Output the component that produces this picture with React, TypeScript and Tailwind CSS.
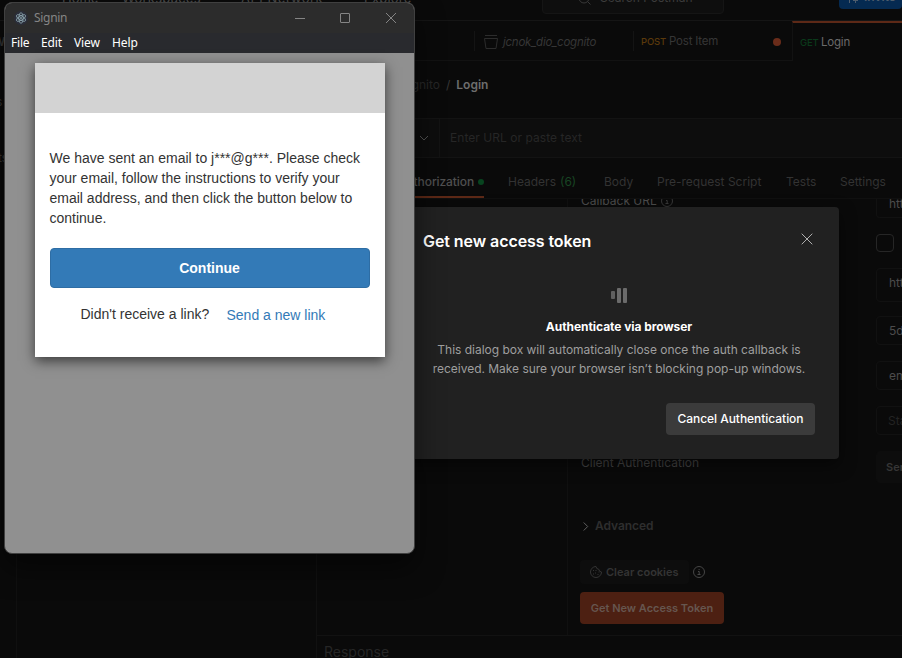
import React from "react";

function InfoIcon({ className }: { className?: string }) {
  return (
    <svg className={className} width="12" height="12" viewBox="0 0 12 12" fill="none" stroke="currentColor">
      <circle cx="6" cy="6" r="5.5" />
      <path d="M5 5.5h1.2V8.5M4.5 8.5h3M5.6 3.5h1" />
    </svg>
  );
}

function TopBar() {
  return (
    <header className="flex h-[21px] shrink-0 items-start overflow-hidden border-b border-[#151515] text-[12px] text-[#3c3c3c]">
      <div className="-mt-[11px] flex h-5 w-[542px] shrink-0 pl-[62px] text-[13px] leading-[18px] text-[#4c4c4c]">
        <span className="w-[60px]">Home</span>
        <span className="w-[119px] tracking-[0.25px]">Workspaces</span>
        <span className="w-[123px] tracking-[0.5px]">API Network</span>
        <span className="tracking-[0.2px]">Explore</span>
      </div>
      <div className="-mt-3 flex h-[26px] w-[182px] shrink-0 rounded border border-[#151515] bg-[#0e0e0e] pl-[33px]">
        <svg className="mt-0.5" width="16" height="14" viewBox="0 0 16 14" fill="none" stroke="#383838">
          <circle cx="8" cy="7" r="5" />
          <path d="M11.5 10.5l3 3" />
        </svg>
        <span className="ml-2 leading-[17px]">Search Postman</span>
      </div>
      <div className="-mt-3 ml-[115px] flex h-[21px] w-[63px] shrink-0 rounded bg-[#052a51] pl-2 font-semibold text-[#4e5d6d]">
        <svg className="mt-2" width="13" height="9" viewBox="0 0 13 9" fill="none" stroke="currentColor">
          <path d="M2.500 1v6M8.500 1v6M6 4.500h5" />
        </svg>
        <span className="ml-1 leading-[17px]">Invite</span>
      </div>
    </header>
  );
}

function RequestTabs() {
  return (
    <div className="flex h-10 shrink-0 text-[11px] text-[#363636]">
      <div className="w-[157px] shrink-0 border-b border-[#121212]" />
      <div className="flex w-[159px] shrink-0 items-center border-b border-[#121212]">
        <div className="flex h-5 w-full items-center border-l border-[#141414] pl-[9px]">
          <svg className="mt-[3px]" width="14" height="14" viewBox="0 0 14 14" fill="none" stroke="#2c2c2c">
            <path d="M1 .5h12M.5 3.500h13L12 13.500H2L.5 3.500z" />
          </svg>
          <span className="mt-1 ml-[5px] text-[11.500px] tracking-[-0.25px] italic">jcnok_dio_cognito</span>
        </div>
      </div>
      <div className="flex w-[159px] shrink-0 items-center border-b border-[#121212]">
        <div className="flex h-5 w-full items-center border-l border-[#141414] pt-[3px] pl-[7px]">
          <span className="w-[28px] text-[9.500px] font-medium tracking-[-0.2px] text-[#5a390b]">POST</span>
          <span className="w-[104px] text-[11.500px] tracking-[-0.2px]">Post Item</span>
          <i className="size-2 rounded-full bg-[#6a2c1a]" />
        </div>
      </div>
      <div className="flex flex-1 items-center border-t-2 border-l border-t-[#5d2917] border-l-[#121212] pt-[2px] pl-[7px]">
        <span className="w-[21px] text-[9.500px] font-medium tracking-[-0.2px] text-[#0a3a1b]">GET</span>
        <span className="text-[11.500px] tracking-[-0.2px] text-[#6a6a6a]">Login</span>
      </div>
    </div>
  );
}

function RequestPane() {
  return (
    <>
      <div className="flex h-[57px] shrink-0 pt-4 pl-[79px] text-[12px] leading-4 text-[#262626]">
        <span className="w-11 text-right">cognito</span>
        <span className="ml-[6px] text-[#383838]">/</span>
        <span className="ml-[6px] font-semibold text-[#6d6d6d]">Login</span>
      </div>
      <div className="flex h-10 shrink-0 items-center border-y border-[#131313] bg-[#0d0d0d]">
        <div className="flex h-full w-[123px] items-center justify-end border-r border-[#131313] pr-[10px]">
          <svg width="10" height="6" viewBox="0 0 10 6" fill="none" stroke="#505050"><path d="M1 1l4 4 4-4" /></svg>
        </div>
        <span className="ml-[10px] text-[12px] tracking-[0.05px] text-[#262626]">Enter URL or paste text</span>
      </div>
      <div className="flex h-[41px] shrink-0 border-b border-[#101010] text-[12px] text-[#333]">
        <div className="ml-[60px] flex h-10 w-[107px] shrink-0 items-center justify-end border-b-2 border-[#5d2917] pt-[10px] font-medium text-[#505050]">
          <span className="tracking-[-0.1px]">Authorization</span>
          <i className="ml-1 size-[6px] rounded-full bg-[#08441f]" />
        </div>
        <div className="flex h-10 items-center pt-2 pl-6 whitespace-nowrap">
          <span className="w-[52px]">Headers</span>
          <span className="w-[44px] text-[#184523]">(6)</span>
          <span className="w-[53px]">Body</span>
          <span className="w-[129px]">Pre-request Script</span>
          <span className="w-[54px]">Tests</span>
          <span>Settings</span>
        </div>
      </div>
    </>
  );
}

function Field({ children, className }: { children?: React.ReactNode; className: string }) {
  return (
    <div className={"w-[120px] shrink-0 rounded border text-[#4c4c4c] " + className}>
      {children}
    </div>
  );
}

function TokenSettings() {
  return (
    <div className="flex h-[437px] shrink-0 border-b border-[#121212] text-[12px]">
      <div className="w-[251px] shrink-0 border-r border-[#101010]" />
      <div className="flex w-[308px] shrink-0 flex-col overflow-hidden pl-3">
        <div className="-mt-[6px] flex h-4 shrink-0 items-center pl-px text-[#4c4c4c]">
          <span>Callback URL</span>
          <InfoIcon className="ml-1 text-[#383838]" />
        </div>
        <div className="mt-[246px] h-4 pl-px leading-4 text-[#434343]">Client Authentication</div>
        <div className="mt-[47px] flex h-4 items-center font-semibold tracking-[-0.05px] text-[#2e2e2e]">
          <svg className="mr-[6px] ml-[3px]" width="6" height="9" viewBox="0 0 6 9" fill="none" stroke="#606060"><path d="M.7.5l4 4-4 4" /></svg>
          Advanced
        </div>
        <div className="mt-[26px] flex h-6 items-center">
          <div className="flex h-6 w-[109px] items-center rounded bg-[#0d0d0d] pl-[10px] text-[11px] font-semibold text-[#343434]">
            <svg className="mr-1 shrink-0" width="12" height="12" viewBox="0 0 12 12" fill="none" stroke="currentColor">
              <path d="M6 .5a5.500 5.500 0 105.500 5.500A3 3 0 018.800 3.300 3 3 0 016 .5z" />
              <path d="M3 4.500h1M5 7h1M3 8h1M7.500 8.500h1M8.500 6h1M5.500 4.500h1" />
            </svg>
            <span className="whitespace-nowrap">Clear cookies</span>
          </div>
          <InfoIcon className="ml-1 text-[#464646]" />
        </div>
        <button className="mt-2 h-8 w-36 shrink-0 rounded bg-[#4d2012] text-[11px] font-semibold text-[#66564f]">Get New Access Token</button>
      </div>
      <div className="flex min-w-0 flex-1 flex-col overflow-hidden">
        <Field className="h-[19px] rounded-t-none border-t-0 border-[#111] pl-[12px] leading-[10px]">https</Field>
        <div className="mt-4 size-[18px] shrink-0 rounded border border-[#262626]" />
        <Field className="mt-4 h-[34px] border-[#111] pl-[12px] leading-[28px]">https</Field>
        <Field className="mt-[14px] h-[29px] border-[#111] pl-[12px] leading-[28px]">5d8a</Field>
        <Field className="mt-4 h-[29px] border-[#111] pl-[12px] leading-[27px]">email</Field>
        <Field className="mt-4 h-[29px] border-[#111] pl-[11px] leading-[28px] text-[#232323]!">State</Field>
        <Field className="mt-4 h-8 border-[#0d0d0d] bg-[#0d0d0d] pl-[9px] text-[11px] leading-[30px] font-semibold text-[#363636]!">Send</Field>
      </div>
    </div>
  );
}

function TokenDialog() {
  return (
    <section className="absolute top-[207px] left-[399px] h-[252px] w-[440px] rounded bg-[#212121] px-6 pt-6 shadow-[0_6px_16px_rgba(0,0,0,0.5)]">
      <div className="flex h-5 items-center justify-between pr-[2px]">
        <h1 className="text-[16px] font-semibold tracking-[-0.07px] text-white">Get new access token</h1>
        <svg width="12" height="12" viewBox="0 0 12 12" className="-mt-[5px]" fill="none" stroke="#b0b0b0"><path d="M.7.7l10.600 10.600M11.300.7L.7 11.300" /></svg>
      </div>
      <div className="mt-9 flex h-4 items-center justify-center gap-[2px]">
        <i className="h-2 w-1 rounded-[1px] bg-[#606060]" />
        <i className="h-[15px] w-1 rounded-[1px] bg-[#6b6b6b]" />
        <i className="h-[15px] w-1 rounded-[1px] bg-[#6b6b6b]" />
      </div>
      <h2 className="mt-4 text-center text-[12px] leading-4 font-bold tracking-[-0.05px] text-white">Authenticate via browser</h2>
      <p className="mt-[5px] text-center text-[12px] leading-[19px] tracking-[-0.02px] whitespace-nowrap text-[#9f9f9f]">
        This dialog box will automatically close once the auth callback is<br />
        received. Make sure your browser isn’t blocking pop-up windows.
      </p>
      <div className="mt-[25px] flex justify-end">
        <button className="h-8 w-[149px] rounded bg-[#3b3b3b] text-[12px] font-medium tracking-[-0.04px] text-white">Cancel Authentication</button>
      </div>
    </section>
  );
}

function SigninWindow() {
  return (
    <section className="absolute top-[2px] left-1 flex h-[552px] w-[411px] flex-col overflow-hidden rounded-lg border border-[#404040] bg-[#909090] shadow-[0_14px_28px_rgba(0,0,0,0.5)]">
      <div className="flex h-[30px] shrink-0 items-center bg-[#2c2c2c] pl-[9px] text-[#858585]">
        <div className="flex size-[14px] items-center justify-center rounded-full bg-[#2b2e3a]">
          <svg width="12" height="12" viewBox="0 0 12 12" fill="none" stroke="#8fa9b1" strokeWidth=".8">
            <ellipse cx="6" cy="6" rx="5.200" ry="2.100" transform="rotate(30 6 6)" />
            <ellipse cx="6" cy="6" rx="5.200" ry="2.100" transform="rotate(90 6 6)" />
            <ellipse cx="6" cy="6" rx="5.200" ry="2.100" transform="rotate(150 6 6)" />
            <circle cx="6" cy="6" r=".6" fill="#8fa9b1" />
          </svg>
        </div>
        <span className="ml-[6px] w-[261px] font-['Noto_Sans',sans-serif] text-[12px] tracking-[-0.3px]">Signin</span>
        <svg width="102" height="12" viewBox="0 0 102 12" fill="none" stroke="currentColor">
          <path d="M0 6.500h10" />
          <rect x="45.500" y="1.500" width="9" height="9" rx=".5" />
          <path d="M91 1l10 10M101 1L91 11" />
        </svg>
      </div>
      <nav className="flex h-5 shrink-0 items-center bg-[#292a2e] pl-[6px] font-['Noto_Sans',sans-serif] text-[12px] text-white">
        <span className="w-[30px] tracking-[-0.2px]">File</span>
        <span className="w-[33px] tracking-[-0.1px]">Edit</span>
        <span className="w-[38px] tracking-[-0.1px]">View</span>
        <span className="tracking-[-0.1px]">Help</span>
      </nav>
      <main className="mx-auto mt-[10px] h-[294px] w-[350px] shrink-0 bg-white font-['Liberation_Sans',Arial,sans-serif] text-[14px] leading-5 text-[#333] shadow-[0_4px_12px_rgba(0,0,0,0.6)]">
        <div className="h-[50px] bg-[#d3d3d3]" />
        <div className="px-[15px] pt-[35px]">
          <p className="whitespace-nowrap">
            We have sent an email to j***@g***. Please check<br />
            your email, follow the instructions to verify your<br />
            email address, and then click the button below to<br />
            continue.
          </p>
          <button className="mt-5 h-10 w-full rounded border border-[#2e6da4] bg-[#337ab7] font-bold text-white">Continue</button>
          <div className="mt-4 flex pl-[31px]">
            <span className="w-[146px]">Didn't receive a link?</span>
            <a className="mt-px text-[#337ab7]">Send a new link</a>
          </div>
        </div>
      </main>
    </section>
  );
}

export default function App() {
  return (
    <div className="relative flex h-[658px] w-[902px] flex-col overflow-hidden bg-[#0a0a0a] font-['Inter',sans-serif]">
      <TopBar />
      <div className="flex min-h-0 flex-1">
        <aside className="w-[17px] shrink-0 border-r border-[#101010] text-[12px] text-[#343434]">
          <div className="mt-3 -ml-[7px] font-semibold">W</div>
          <div className="mt-[42px] -ml-1">s</div>
          <div className="mt-[38px] -ml-[2px]">ts</div>
        </aside>
        <aside className="w-[300px] shrink-0 border-r border-[#111]" />
        <div className="flex min-w-0 flex-1 flex-col">
          <RequestTabs />
          <RequestPane />
          <TokenSettings />
          <div className="h-[22px] shrink-0 overflow-hidden pt-[6px] pl-[7px] text-[14px] leading-5 text-[#262626]">Response</div>
        </div>
      </div>
      <TokenDialog />
      <SigninWindow />
    </div>
  );
}
